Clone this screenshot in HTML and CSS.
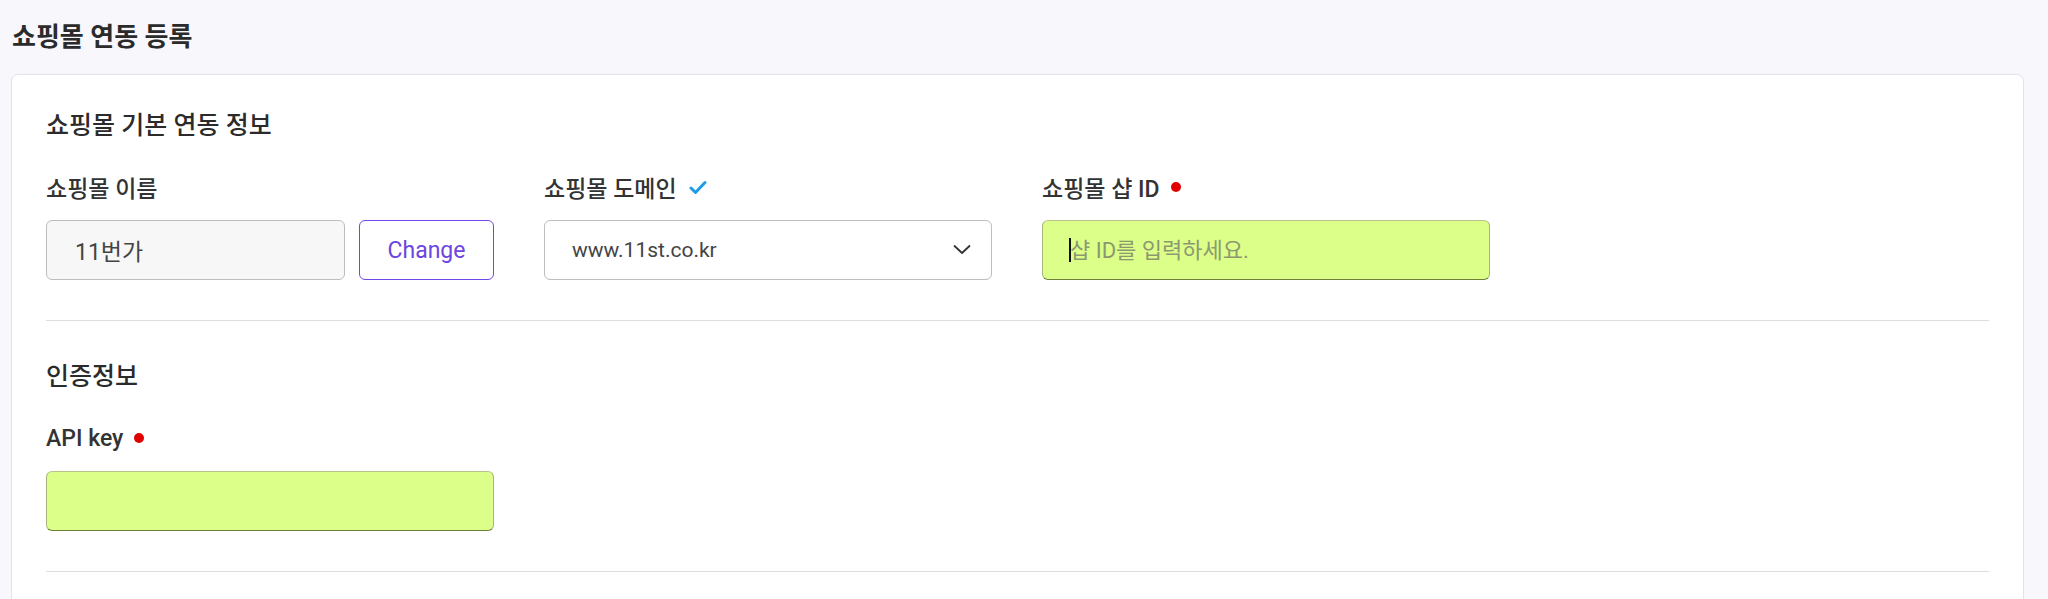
FILE: index.html
```
<!DOCTYPE html>
<html lang="ko">
<head>
    <meta charset="utf-8">
    <title>쇼핑몰 연동 등록</title>
    <link rel="stylesheet" href="styles.css">
</head>
<body>
    <div class="page">
        <h1 class="page-title">쇼핑몰 연동 등록</h1>

        <div class="card">
            <div class="section first">
                <h2 class="section-title">쇼핑몰 기본 연동 정보</h2>

                <div class="fields">
                    <div class="field">
                        <label for="mallName">쇼핑몰 이름</label>
                        <div class="input-row">
                            <input type="text" id="mallName" class="text-input readonly" value="11번가" readonly>
                            <button class="btn-change">Change</button>
                        </div>
                    </div>

                    <div class="field">
                        <label for="mallDomain">쇼핑몰 도메인
                            <svg class="check" width="18" height="15" viewBox="0 0 18 15">
                                <path d="M2 8 L6.5 12.5 L16 2.5" fill="none" stroke="#1e9be9" stroke-width="3" stroke-linecap="round" stroke-linejoin="round"/>
                            </svg>
                        </label>
                        <div class="select-wrap">
                            <select id="mallDomain" class="text-input select">
                                <option>www.11st.co.kr</option>
                            </select>
                            <svg class="chevron" width="18" height="9" viewBox="0 0 18 9">
                                <path d="M1.5 1 L9 8 L16.5 1" fill="none" stroke="#333" stroke-width="1.8" stroke-linecap="round" stroke-linejoin="round"/>
                            </svg>
                        </div>
                    </div>

                    <div class="field">
                        <label for="shopId">쇼핑몰 샵 ID <span class="required"></span></label>
                        <div class="caret-wrap">
                            <input type="text" id="shopId" class="text-input required-input" placeholder="샵 ID를 입력하세요.">
                            <span class="caret"></span>
                        </div>
                    </div>
                </div>
            </div>

            <div class="section">
                <h2 class="section-title">인증정보</h2>

                <div class="fields">
                    <div class="field">
                        <label for="apiKey">API key <span class="required"></span></label>
                        <input type="text" id="apiKey" class="text-input required-input">
                    </div>
                </div>
            </div>
        </div>
    </div>
</body>
</html>
```

FILE: styles.css
```
body {
    font-family: Roboto, "Noto Sans CJK KR", sans-serif;
    background-color: #f7f7fc;
    margin: 0;
    padding: 0;
    color: #333;
}

.page {
    padding: 0 24px 0 11px;
}

.page-title {
    margin: 0;
    padding: 20px 0 0 1px;
    height: 54px;
    font-size: 26px;
    line-height: 34px;
    font-weight: 700;
    color: #2b2b2b;
}

.card {
    background-color: #fff;
    border: 1px solid #e2e2e8;
    border-radius: 7px;
    padding: 0 34px;
    min-height: 560px;
}

.section {
    padding: 42px 0 40px;
    border-bottom: 1px solid #dedede;
}

.section.first {
    padding-top: 37px;
}

.section-title {
    margin: 0 0 34px;
    font-size: 25px;
    line-height: 28px;
    font-weight: 500;
    color: #2b2b2b;
}

.fields {
    display: grid;
    grid-template-columns: repeat(3, 448px);
    column-gap: 50px;
}

.field label {
    display: flex;
    align-items: center;
    gap: 11px;
    height: 26px;
    margin-bottom: 20px;
    font-size: 23px;
    font-weight: 500;
    color: #333;
}

.check {
    margin-left: 1px;
}

.required {
    display: inline-block;
    width: 10px;
    height: 10px;
    border-radius: 50%;
    background-color: #e00000;
}

.input-row {
    display: flex;
    gap: 14px;
}

.text-input {
    box-sizing: border-box;
    width: 100%;
    height: 60px;
    padding: 0 20px 0 27px;
    border: 1px solid #bdbdbd;
    border-radius: 6px;
    background-color: #fff;
    font-family: Roboto, "Noto Sans CJK KR", sans-serif;
    font-size: 22px;
    color: #444;
    outline: none;
}

.text-input.readonly {
    flex: 1;
    font-size: 23px;
    padding-left: 28px;
    background-color: #f7f7f7;
}

.btn-change {
    width: 135px;
    height: 60px;
    flex-shrink: 0;
    background-color: #fff;
    border: 1.5px solid #7048e8;
    border-radius: 6px;
    color: #6d45df;
    font-family: Roboto, sans-serif;
    font-size: 23px;
    cursor: pointer;
}

.select-wrap,
.caret-wrap {
    position: relative;
}

.select {
    appearance: none;
    -webkit-appearance: none;
    font-size: 21px;
}

.chevron {
    position: absolute;
    right: 21px;
    top: 25px;
    pointer-events: none;
}

.required-input {
    background-color: #dbff88;
    border-color: #b4c48a #a6b67a #6f803b #a6b67a;
}

.required-input::placeholder {
    color: #8d9870;
}

.caret {
    position: absolute;
    left: 27px;
    top: 18px;
    width: 2px;
    height: 24px;
    background-color: #111;
    pointer-events: none;
}
```
